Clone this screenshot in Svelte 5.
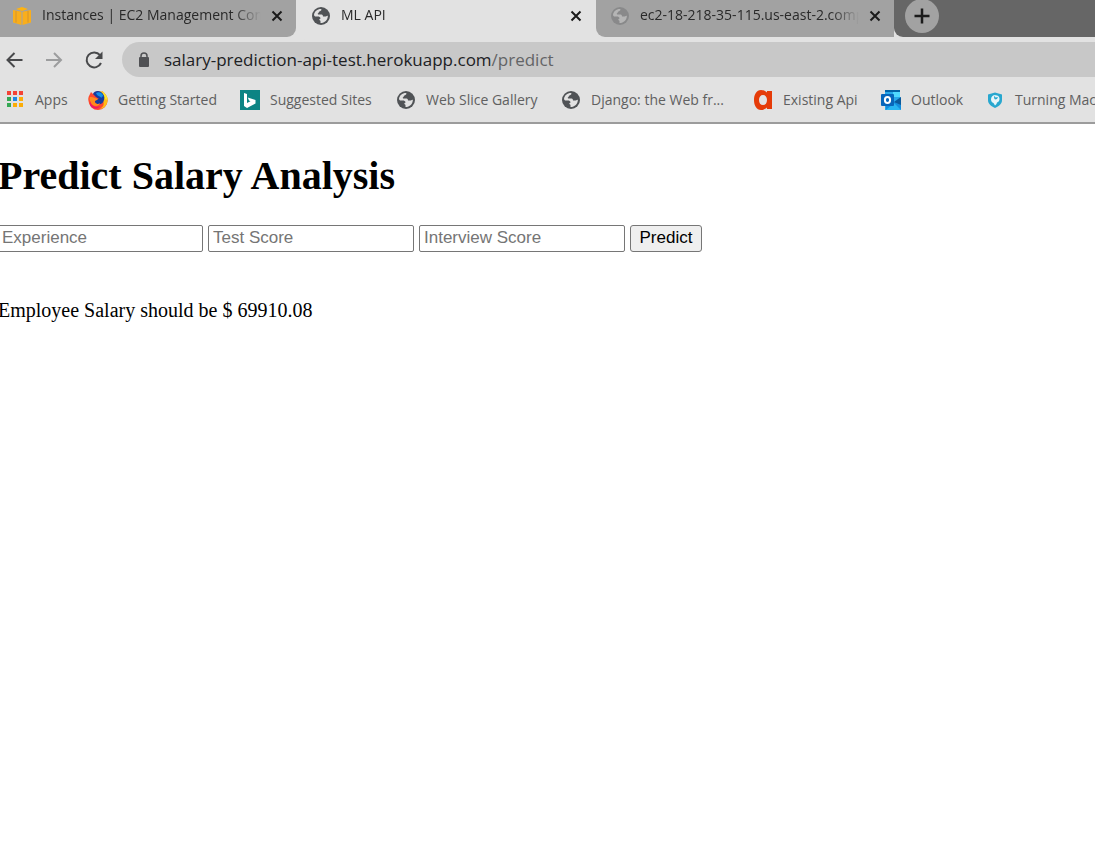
<script>
  const tabs = [
    { title: 'Instances | EC2 Management Console', icon: 'cube', active: false },
    { title: 'ML API', icon: 'globe', active: true },
    { title: 'ec2-18-218-35-115.us-east-2.compute', icon: 'globe', active: false }
  ];
  const bookmarks = [
    { label: 'Apps', icon: 'apps' },
    { label: 'Getting Started', icon: 'firefox' },
    { label: 'Suggested Sites', icon: 'bing' },
    { label: 'Web Slice Gallery', icon: 'globe' },
    { label: 'Django: the Web fr...', icon: 'globe' },
    { label: 'Existing Api', icon: 'letter' },
    { label: 'Outlook', icon: 'outlook' },
    { label: 'Turning Machine', icon: 'shield' }
  ];
  const appColors = ['#f44336', '#f44336', '#f44336', '#34a853', '#1e88e5', '#fbad08', '#34a853', '#fbad08', '#fbad08'];
  const fields = ['Experience', 'Test Score', 'Interview Score'];
</script>

{#snippet icon(name)}
  <svg class="icon" viewBox="0 0 20 20" aria-hidden="true">
    {#if name === 'globe'}
      <circle cx="10" cy="10" r="9" fill="#505356" />
      <path d="M3 9C3.300 5.500 6.500 2.800 10.300 3c.4 1.300-.5 2.200-1.800 2.400-.8.2-.6 1.500-1.400 1.900-.7.4-.2 1.300.5 1.300h3c1.100 0 1.400 1 1.400 2h2.100c1 0 1.400-1 2.800-.9C16.700 14 13.800 17 9.500 17v-1.700c0-.7-.7-.9-1.100-1.300-.5-.6.4-1.300 1.200-1.600-.2-1.400-1.500-1.900-2.700-1.900H4.800C3.800 10.500 3.100 9.900 3 9Z" fill="#e2e2e2" />
    {:else if name === 'cube'}
      <path d="M10 1 16 3l-6 2-6-2Z" fill="#ffb30f" />
      <path d="m1 4 8.500 1.800V19L1 16.500Z" fill="#f9ae1c" />
      <path d="m19 4-8.500 1.800V19L19 16.500Z" fill="#f9ae1c" />
      <path d="M4 5v11.500M16 5v11.500" stroke="#d2942f" />
    {:else if name === 'apps'}
      {#each appColors as color, i}
        <rect x={2 + (i % 3) * 6} y={1 + Math.floor(i / 3) * 6} width="4" height="4" fill={color} />
      {/each}
    {:else if name === 'firefox'}
      <path d="M1 6 3 2l2 2c2-2 5-3 6-3l2 2 1-2c4 3 6 6 5.500 10A9.500 9 0 0 1 10 20 9.500 9.500 0 0 1 .5 11C0 9 .5 7 1 6Z" fill="#ff482f" />
      <path d="M12 1c5 2 8 6 7.500 10-.5 5-4.500 8-8 8 4-2 5-5 3.500-8-1-2-4-3-4-5 0-1 0-3 1-5Z" fill="#ffbd16" />
      <path d="M14 1c3 2 6 6 5.500 9l-3-1c0-2-2-4-2.500-8Z" fill="#ffe52b" />
      <path d="M5 4c1-3 5-4 8-2 3 2 4 5 3 8-1 4-4 5-7 4-2-1-3-3-2-5h4L8 7Z" fill="#173b9f" />
      <path d="M8 3c3-2 7 0 7.500 4-1-1-2 0-2 1-1-2-4-1-5.500-5Z" fill="#158fe8" />
      <path d="M2 7c2 0 3 0 5 1l3 1c0 1-2 1-3 2-1 3 3 4 5 2-1 4-7 4-9 0C2 11 1 9 2 7Z" fill="#ff8b1d" />
      <path d="M2 11c1 5 6 7 10 5-3 5-9 2-10-1Z" fill="#ef1765" />
    {:else if name === 'bing'}
      <path d="M0 0h20v20H0Z" fill="#0c8484" />
      <path d="m4 3 3 1v9l3.500-1.800-1.500-.7L7.800 7.500 15.500 10v3.500L7 18l-3-2Z" fill="#fff" />
    {:else if name === 'letter'}
      <path d="M14 2.500V1h5v18h-5v-1.500C12 19 10.500 20 8 20 3.500 20 1 15.500 1 10S3.500 0 8 0c2.500 0 4 1 6 2.500ZM10 5C7.500 5 6 7 6 10s1.500 5 4 5 4-2 4-5-1.500-5-4-5Z" fill="#e53b08" fill-rule="evenodd" />
    {:else if name === 'outlook'}
      <path d="M4 0h15v20H4Z" fill="#28a8ea" />
      <path d="M4 0h15v2H4Z" fill="#0364a8" />
      <path d="M12 2h7v5h-7Z" fill="#50d9ff" />
      <path d="m12 13 8-6v13H5v-4Z" fill="#148ddd" />
      <path d="m5 20 8-7 7 7Z" fill="#28b5f2" />
      <path d="m13 12 7 3V7Z" fill="#0a5a9c" />
      <rect y="4" width="13" height="12" rx="1" fill="#0866bb" />
      <ellipse cx="6.500" cy="10" rx="2.600" ry="3" fill="none" stroke="#fff" stroke-width="2" />
    {:else if name === 'shield'}
      <path d="m10 2.500 7 2V10c0 4-3 6-7 8-4-2-7-4-7-8V4.500Z" fill="#28a7cf" />
      <path d="M6 9.500c0-2.500 1.500-4 3.500-4.500l2.500.5c2 .5 2.500 2 2.500 3.500 0 2-1 3-2.500 3.500L11.500 14 10 15.500 8.500 13C7 12.500 6 11 6 9.500Z" fill="#e8f5f8" />
      <path d="m9.500 5.500 1 2 2.500-.5-1 2-2 .500-1-1.500Z" fill="#28a7cf" />
    {/if}
  </svg>
{/snippet}

{#snippet cross()}
  <svg class="cross" viewBox="0 0 12 12" aria-hidden="true">
    <path d="m1.500 1.500 9 9m0-9-9 9" stroke="#1b1b1b" stroke-width="2" />
  </svg>
{/snippet}

<header>
  <nav class="tabs" aria-label="Tabs">
    {#each tabs as tab}
      <div class="tab" class:active={tab.active}>
        {@render icon(tab.icon)}
        <span class="title">{tab.title}</span>
        <button class="close" aria-label="Close tab">{@render cross()}</button>
      </div>
    {/each}
    <div class="rest">
      <button class="new" aria-label="New tab">
        <svg viewBox="0 0 34 34" aria-hidden="true"><path d="M17 9.500v15M9.500 17h15" stroke="#1b1b1b" stroke-width="2.500" /></svg>
      </button>
    </div>
  </nav>

  <div class="toolbar">
    <button aria-label="Back">
      <svg viewBox="0 0 20 20" aria-hidden="true"><path d="M18.500 10H3.500m7-7-7 7 7 7" fill="none" stroke="#48494b" stroke-width="2" /></svg>
    </button>
    <button aria-label="Forward">
      <svg viewBox="0 0 20 20" aria-hidden="true"><path d="M2 10h15m-7-7 7 7-7 7" fill="none" stroke="#9c9d9e" stroke-width="2" /></svg>
    </button>
    <button aria-label="Reload">
      <svg viewBox="0 0 20 20" aria-hidden="true"><path d="M16 5.200A7.500 7.500 0 1 0 17 13" fill="none" stroke="#48494b" stroke-width="2" /><path d="M18.500 1.500V9H11Z" fill="#48494b" /></svg>
    </button>
    <div class="address">
      <svg viewBox="0 0 12 16" aria-hidden="true"><rect x="1" y="5" width="10" height="10" rx="1" fill="#505154" /><path d="M3 6V4a3 3 0 0 1 6 0v2" fill="none" stroke="#505154" stroke-width="1.500" /></svg>
      <a href="#predict">salary-prediction-api-test.herokuapp.com<span>/predict</span></a>
    </div>
  </div>

  <nav class="bookmarks" aria-label="Bookmarks">
    {#each bookmarks as mark}
      <a href="#bookmark">{@render icon(mark.icon)}<span>{mark.label}</span></a>
    {/each}
  </nav>
</header>

<main>
  <h1>Predict Salary Analysis</h1>
  <form onsubmit={(event) => event.preventDefault()}>
    {#each fields as field}
      <input type="text" placeholder={field} aria-label={field} />
    {/each}
    <button type="submit">Predict</button>
  </form>
  <p>Employee Salary should be $ 69910.08</p>
</main>

<style>
  :global(body) {
    margin: 0;
    background: #fff;
  }
  header {
    background: #e2e2e2;
    border-bottom: 2px solid #9c9c9c;
    font-family: "Open Sans", sans-serif;
    overflow: hidden;
  }
  header button {
    padding: 0;
    border: 0;
    background: none;
    display: flex;
    align-items: center;
    justify-content: center;
  }
  a {
    color: inherit;
    text-decoration: none;
    white-space: nowrap;
  }
  svg {
    display: block;
    flex: none;
  }
  .icon {
    width: 20px;
    height: 20px;
  }
  .tabs {
    display: grid;
    grid-template-columns: 296px 300px 298px 1fr;
    height: 37px;
  }
  .tab {
    display: flex;
    align-items: center;
    gap: 10px;
    min-width: 0;
    padding: 0 13px 5px 12px;
    background: #a2a2a2;
    font-size: 14px;
    color: #292929;
  }
  .tab:first-child {
    border-bottom-right-radius: 9px;
    box-shadow: 9px 9px 0 #e2e2e2;
  }
  .tab:nth-child(3) {
    border-bottom-left-radius: 9px;
    padding-left: 14px;
  }
  .tab:nth-child(3) .icon {
    opacity: 0.3;
  }
  .tab.active {
    background: #e2e2e2;
    padding-left: 15px;
    padding-right: 14px;
  }
  .title {
    flex: 1;
    min-width: 0;
    overflow: hidden;
    line-height: 20px;
    padding-bottom: 2px;
    white-space: nowrap;
    mask-image: linear-gradient(to right, #000 calc(100% - 28px), transparent);
  }
  .cross {
    width: 12px;
    height: 12px;
  }
  .rest {
    display: flex;
    background: #666;
    border-bottom-left-radius: 9px;
    padding-left: 11px;
  }
  header .new {
    width: 34px;
    height: 34px;
    margin-top: -1px;
    border-radius: 50%;
    background: #a2a2a2;
  }
  .new svg {
    width: 34px;
    height: 34px;
  }
  .toolbar {
    display: flex;
    align-items: center;
    gap: 20px;
    padding: 5px 0 0 4px;
  }
  .toolbar button svg {
    width: 20px;
    height: 20px;
  }
  .address {
    flex: 1;
    display: flex;
    align-items: center;
    gap: 14px;
    height: 35px;
    margin-left: -2px;
    margin-right: -20px;
    padding-left: 16px;
    border-radius: 18px;
    background: #c8c8c8;
    color: #202124;
    font-size: 17px;
  }
  .address svg {
    width: 12px;
    height: 16px;
  }
  .address span {
    color: #636466;
  }
  .bookmarks {
    display: grid;
    grid-template-columns: 83px 152px 156px 165px 192px 128px 104px 1fr;
    height: 45px;
    padding-left: 5px;
    font-size: 14px;
    color: #606060;
  }
  .bookmarks a {
    display: flex;
    align-items: center;
    gap: 10px;
    min-width: 0;
  }
  main {
    font-family: "Liberation Serif", serif;
    color: #000;
  }
  h1 {
    margin: 29px 0 27px -2px;
    font-size: 40px;
    line-height: 45px;
  }
  form {
    display: flex;
    gap: 5px;
    margin-left: -3px;
  }
  input,
  main button {
    box-sizing: border-box;
    height: 27px;
    border: 1px solid #767676;
    border-radius: 2px;
    font-family: "Liberation Sans", sans-serif;
    font-size: 17px;
  }
  input {
    width: 206px;
    padding: 0 4px 2px;
    background: #fff;
  }
  input::placeholder {
    color: #757575;
    opacity: 1;
  }
  main button {
    width: 72px;
    padding: 0 0 2px;
    border-radius: 3px;
    background: #efefef;
    color: #000;
  }
  p {
    margin: 46px 0 0 -2px;
    font-size: 20px;
    line-height: 24px;
  }
</style>
